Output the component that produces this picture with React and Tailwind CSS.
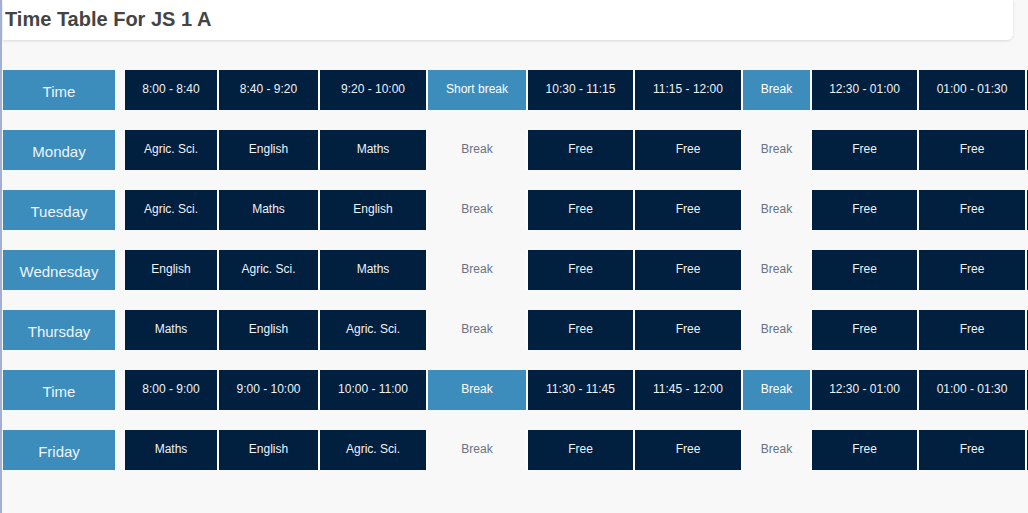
import React from 'react';

// pitch of each column (dark cell + 2px white gap)
const widths = ['w-[94px]', 'w-[101px]', 'w-[108px]', 'w-[100px]', 'w-[107px]', 'w-[108px]', 'w-[69px]', 'w-[107px]', 'w-[108px]', 'w-[108px]'];

const rows = [
  { label: 'Time', head: true, cells: ['8:00 - 8:40', '8:40 - 9:20', '9:20 - 10:00', 'Short break', '10:30 - 11:15', '11:15 - 12:00', 'Break', '12:30 - 01:00', '01:00 - 01:30', ''] },
  { label: 'Monday', cells: ['Agric. Sci.', 'English', 'Maths', 'Break', 'Free', 'Free', 'Break', 'Free', 'Free', ''] },
  { label: 'Tuesday', cells: ['Agric. Sci.', 'Maths', 'English', 'Break', 'Free', 'Free', 'Break', 'Free', 'Free', ''] },
  { label: 'Wednesday', cells: ['English', 'Agric. Sci.', 'Maths', 'Break', 'Free', 'Free', 'Break', 'Free', 'Free', ''] },
  { label: 'Thursday', cells: ['Maths', 'English', 'Agric. Sci.', 'Break', 'Free', 'Free', 'Break', 'Free', 'Free', ''] },
  { label: 'Time', head: true, cells: ['8:00 - 9:00', '9:00 - 10:00', '10:00 - 11:00', 'Break', '11:30 - 11:45', '11:45 - 12:00', 'Break', '12:30 - 01:00', '01:00 - 01:30', ''] },
  { label: 'Friday', cells: ['Maths', 'English', 'Agric. Sci.', 'Break', 'Free', 'Free', 'Break', 'Free', 'Free', ''] },
];

const Cell = ({ text, width, head, isBreak }) => {
  let look = 'bg-[#011f3f] text-[#eef2f8]';
  if (isBreak && head) look = 'bg-[#3c8dbc] text-white';
  if (isBreak && !head) look = 'bg-transparent text-[#6b7280]';
  return (
    <div className={`${width} shrink-0 h-[40px] border-r-2 border-white flex items-center justify-center pb-[2px] text-[12px] ${look}`}>
      {text}
    </div>
  );
};

const App = () => {
  return (
    <div
      className="h-screen overflow-hidden bg-[#f8f8f8] border-l-2 border-[#a3b1d0] pl-px"
      style={{ fontFamily: '"Liberation Sans", Arial, sans-serif' }}
    >
      {/* Header */}
      <div className="w-[1010px] h-[40px] bg-white rounded-br-md shadow-[0_1px_3px_rgba(0,0,0,0.12)] pl-[2px] pt-[5px]">
        <h1 className="text-[20px] leading-[28px] font-bold text-[#444]">Time Table For JS 1 A</h1>
      </div>

      {/* Timetable */}
      <div className="mt-[30px] flex flex-col gap-[20px]">
        {rows.map((row, i) => (
          <div key={i} className="flex">
            <div className="w-[112px] shrink-0 h-[40px] bg-[#3c8dbc] text-[#eef4fb] text-[15px] flex items-center justify-center pt-[4px]">
              {row.label}
            </div>
            <div className="ml-[10px] flex">
              {row.cells.map((c, j) => (
                <Cell
                  key={j}
                  text={c}
                  width={widths[j]}
                  head={row.head}
                  isBreak={j === 3 || j === 6}
                />
              ))}
            </div>
          </div>
        ))}
      </div>
    </div>
  );
};

export default App;
